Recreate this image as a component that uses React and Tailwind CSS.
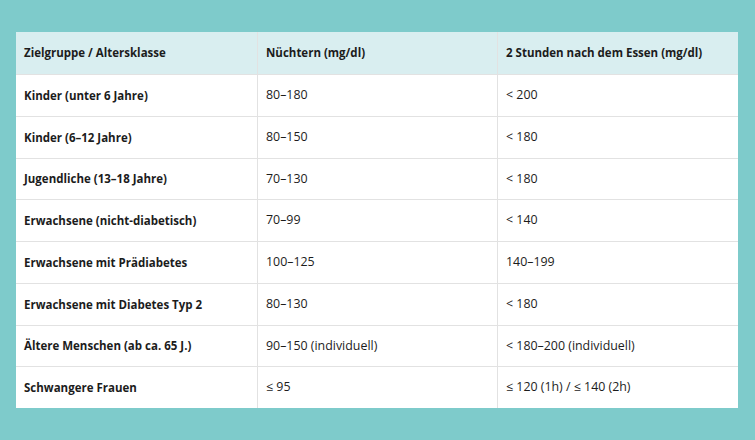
import React from 'react';

const rows = [
  ['Kinder (unter 6 Jahre)', '80–180', '< 200'],
  ['Kinder (6–12 Jahre)', '80–150', '< 180'],
  ['Jugendliche (13–18 Jahre)', '70–130', '< 180'],
  ['Erwachsene (nicht-diabetisch)', '70–99', '< 140'],
  ['Erwachsene mit Prädiabetes', '100–125', '140–199'],
  ['Erwachsene mit Diabetes Typ 2', '80–130', '< 180'],
  ['Ältere Menschen (ab ca. 65 J.)', '90–150 (individuell)', '< 180–200 (individuell)'],
  ['Schwangere Frauen', '≤ 95', '≤ 120 (1h) / ≤ 140 (2h)'],
];

export default function App() {
  return (
    <div className="h-[440px] w-[755px] bg-[#7ecbcb] pl-[16px] pt-[32px] font-['Open_Sans',sans-serif] text-[12.4px] text-[#1c1c1c]">
      <div className="grid h-[376px] w-[722px] grid-cols-[241px_240px_241px] grid-rows-[42px_repeat(8,1fr)] bg-white">
        <div className="flex items-center bg-[#d9eef0] pl-[8px] text-[11.5px] font-bold">Zielgruppe / Altersklasse</div>
        <div className="flex items-center border-l border-[#e2e2e2] bg-[#d9eef0] pl-[8px] text-[11.5px] font-bold">Nüchtern (mg/dl)</div>
        <div className="flex items-center border-l border-[#e2e2e2] bg-[#d9eef0] pl-[8px] text-[11.5px] font-bold">2 Stunden nach dem Essen (mg/dl)</div>
        {rows.map((r) => (
          <React.Fragment key={r[0]}>
            <div className="flex items-center border-t border-[#e2e2e2] pl-[8px] text-[11.5px] font-bold">{r[0]}</div>
            <div className="flex items-center border-l border-t border-[#e2e2e2] pl-[8px]">{r[1]}</div>
            <div className="flex items-center border-l border-t border-[#e2e2e2] pl-[8px]">{r[2]}</div>
          </React.Fragment>
        ))}
      </div>
    </div>
  );
}
